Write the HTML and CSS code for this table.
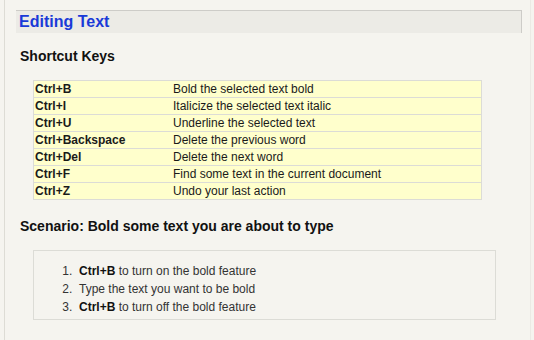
FILE: index.html
```html
<!DOCTYPE html>
<html>
<head>
<meta charset="utf-8">
<link rel="stylesheet" href="styles.css">
</head>
<body>
<div class="page">
  <h1 class="title">Editing Text</h1>
  <div class="content">
    <h2 class="section">Shortcut Keys</h2>
    <div class="keys">
      <div class="row"><span class="key">Ctrl+B</span><span class="desc">Bold the selected text bold</span></div>
      <div class="row"><span class="key">Ctrl+I</span><span class="desc">Italicize the selected text italic</span></div>
      <div class="row"><span class="key">Ctrl+U</span><span class="desc">Underline the selected text</span></div>
      <div class="row"><span class="key">Ctrl+Backspace</span><span class="desc">Delete the previous word</span></div>
      <div class="row"><span class="key">Ctrl+Del</span><span class="desc">Delete the next word</span></div>
      <div class="row"><span class="key">Ctrl+F</span><span class="desc">Find some text in the current document</span></div>
      <div class="row"><span class="key">Ctrl+Z</span><span class="desc">Undo your last action</span></div>
    </div>
    <h2 class="section scenario">Scenario: Bold some text you are about to type</h2>
    <div class="box">
      <ol class="steps">
        <li><b>Ctrl+B</b> to turn on the bold feature</li>
        <li>Type the text you want to be bold</li>
        <li><b>Ctrl+B</b> to turn off the bold feature</li>
      </ol>
    </div>
  </div>
</div>
</body>
</html>
```
FILE: styles.css
```css
html, body {
  margin: 0;
  padding: 0;
  background: #f5f4ef;
  font-family: "Liberation Sans", Arial, sans-serif;
}

.page {
  margin-left: 4px;
  width: 527px;
  min-height: 340px;
  box-sizing: border-box;
  border-left: 1px solid #dddcd5;
  border-right: 1px solid #ebeae4;
  padding: 10px 0 0 11px;
}

.title {
  margin: 0;
  width: 506px;
  height: 23px;
  box-sizing: border-box;
  border-top: 1px solid #cdccc8;
  border-right: 1px solid #cdccc8;
  background: #ecebe6;
  color: #1a3ad8;
  font-size: 16px;
  font-weight: bold;
  line-height: 21px;
  padding: 0 0 1px 3px;
}

.content {
  padding-left: 4px;
}

.section {
  margin: 15px 0 0 0;
  font-size: 14px;
  font-weight: bold;
  line-height: 17px;
  color: #111;
}

.scenario {
  margin-top: 18px;
}

.keys {
  margin: 15px 0 0 13px;
  width: 449px;
  box-sizing: border-box;
  border: 1px solid #dcdcd6;
  border-bottom: none;
  background: #ffffcc;
  font-size: 12px;
  color: #1a1a1a;
}

.row {
  display: flex;
  height: 16px;
  line-height: 16px;
  border-bottom: 1px solid #dcdcd6;
}

.key {
  width: 138px;
  padding-left: 1px;
  box-sizing: border-box;
  font-weight: bold;
}

.desc {
  padding-left: 1px;
}

.box {
  margin: 15px 0 0 13px;
  width: 463px;
  height: 70px;
  box-sizing: border-box;
  border: 1px solid #dcdcd6;
  padding: 11px 0 3px 0;
}

.steps {
  margin: 0;
  padding-left: 45px;
  font-size: 12px;
  line-height: 18px;
  color: #333;
}

.steps li::marker {
  content: counter(list-item) ".\00a0\00a0";
}

.steps b {
  color: #111;
}
```
